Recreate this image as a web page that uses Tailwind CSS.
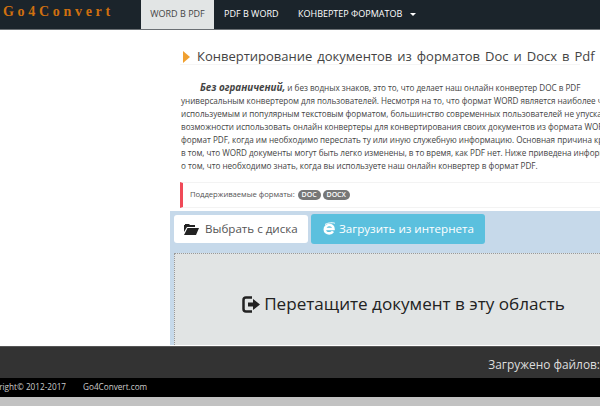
<!DOCTYPE html>
<html lang="ru">
<head>
    <meta charset="UTF-8">
    <title>Go4Convert</title>
    <script src="https://cdn.jsdelivr.net/npm/@tailwindcss/browser@4"></script>
</head>
<body class="w-[600px] h-[406px] overflow-hidden bg-white font-['Open_Sans',sans-serif]">

    <!-- nav -->
    <div class="flex h-[30px] bg-[#1b242b] border-b border-b-[#6b7074] text-[9px] text-white whitespace-nowrap">
        <div class="w-[141px] pl-[3px] font-['Liberation_Serif',serif] font-bold text-[14px] leading-[23px] tracking-[3.7px] text-[#d0700f]">Go4Convert</div>
        <div class="w-[73px] h-[29px] leading-[27px] text-center bg-[#e2e5e5] text-[#444]">WORD В PDF</div>
        <div class="w-[84px] pl-[10px] leading-[27px]">PDF В WORD</div>
        <div class="leading-[27px] flex items-start">
            <span>КОНВЕРТЕР ФОРМАТОВ</span>
            <span class="ml-[8px] mt-[13px] w-0 h-0 border-x-[3px] border-x-transparent border-t-[3px] border-t-white"></span>
        </div>
    </div>

    <div class="flex h-[316px]">
        <div class="w-[170px] shrink-0"></div>
        <div class="w-[430px] overflow-hidden">

            <!-- heading -->
            <div class="flex items-center h-[19px] mt-[16px] pt-[3px] ml-[10px] w-[400px] pl-[3px] border-b border-b-[#f5f5f5] whitespace-nowrap">
                <span class="w-0 h-0 border-y-[6px] border-y-transparent border-l-[7px] border-l-[#f0a030] mr-[7px]"></span>
                <span class="text-[13px] [word-spacing:1.6px] text-[#444]">Конвертирование документов из форматов Doc и Docx в Pdf</span>
            </div>

            <!-- description -->
            <div class="mt-[16px] pl-[11px] text-[8.15px] tracking-[-0.02px] leading-[13px] text-[#444] whitespace-nowrap">
                <p class="pl-[19px]"><b class="text-[9.9px] italic">Без ограничений,</b> и без водных знаков, это то, что делает наш онлайн конвертер DOC в PDF</p>
                <p>универсальным конвертером для пользователей. Несмотря на то, что формат WORD является наиболее часто</p>
                <p>используемым и популярным текстовым форматом, большинство современных пользователей не упускают</p>
                <p>возможности использовать онлайн конвертеры для конвертирования своих документов из формата WORD в</p>
                <p>формат PDF, когда им необходимо переслать ту или иную служебную информацию. Основная причина кроется</p>
                <p>в том, что WORD документы могут быть легко изменены, в то время, как PDF нет. Ниже приведена информация</p>
                <p>о том, что необходимо знать, когда вы используете наш онлайн конвертер в формат PDF.</p>
            </div>

            <!-- formats -->
            <div class="flex items-center h-[26px] mt-[10px] ml-[10px] pl-[7px] border-l-[3px] border-l-[#f04a58] border-y border-y-[#f3f3f3] text-[7.7px] tracking-[-0.05px] text-[#555] whitespace-nowrap">
                <span>Поддерживаемые форматы:</span>
                <span class="ml-[3px] px-[4px] h-[10px] leading-[10px] rounded-full bg-[#777] text-white font-semibold text-[7px]">DOC</span>
                <span class="ml-[2px] px-[4px] h-[10px] leading-[10px] rounded-full bg-[#777] text-white font-semibold text-[7px]">DOCX</span>
            </div>

            <!-- upload -->
            <div class="h-[134px] mt-[3px] bg-[#c6d9ea] pt-[3px] pl-[4px]">
                <div class="flex gap-[3px] text-[11.6px] whitespace-nowrap">
                    <div class="flex items-center w-[134px] h-[28px] mt-[1px] pl-[10px] bg-white rounded-[3px] text-[#555]">
                        <svg class="w-[15px] h-[12px] mr-[6px]" viewBox="0 0 15 12"><path fill="#222" d="M0 2h1V1h4l1 1h5v2H3L0 9zM3.5 5H15l-3 7H0z"/></svg>
                        Выбрать с диска
                    </div>
                    <div class="flex items-center w-[174px] h-[30px] pl-[11px] bg-[#5bc0de] rounded-[3px] text-white">
                        <svg class="w-[14px] h-[14px] mr-[3px]" viewBox="0 0 14 14"><path fill="none" stroke="#fff" stroke-width="2.600" d="M3 7h8.500C11.500 4.500 9.500 3 7.200 3 4.700 3 2.800 5 2.800 7.400s2 4 4.400 4c1.700 0 3-.7 3.800-2"/><path fill="none" stroke="#fff" stroke-width="1" d="M3 2.500C6 .5 12 .3 13 1.500"/></svg>
                        Загрузить из интернета
                    </div>
                </div>
                <div class="w-[458px] h-[92px] mt-[9px] pt-[37px] flex justify-center items-start bg-[#e1e4e4] border-t border-l border-dotted border-[#999] text-[17.100px] text-[#222] whitespace-nowrap">
                    <div class="flex items-center leading-[26px]">
                        <svg class="w-[19px] h-[17px] mr-[3px]" viewBox="0 0 19 17"><path fill="none" stroke="#222" stroke-width="2.500" d="M10 1.500H4Q1.500 1.500 1.500 4v9q0 2.500 2.500 2.500h6"/><path fill="#222" d="M6 6.500h5V3l7 5.500-7 5.500v-3.500H6z"/></svg>
                        Перетащите документ в эту область
                    </div>
                </div>
            </div>
        </div>
    </div>

    <!-- footer -->
    <div class="h-[32px] bg-[#333] border-t border-t-[#555] text-[11.900px] leading-[34px] text-[#ddd] whitespace-nowrap overflow-hidden flex justify-end">
        <span>Загружено файлов:</span>
    </div>
    <div class="flex h-[19px] bg-black text-[8.2px] leading-[18px] text-[#ccc] whitespace-nowrap overflow-hidden">
        <span class="w-[84px] -ml-[20px] shrink-0 text-right mr-[19px]">Copyright© 2012-2017</span>
        <span>Go4Convert.com</span>
    </div>
    <div class="h-[10px] bg-[#c2c2c2]"></div>
</body>
</html>
